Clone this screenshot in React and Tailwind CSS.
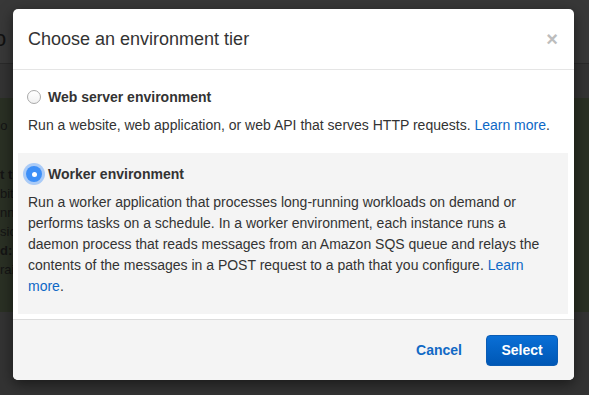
import React from "react";

const font = { fontFamily: '"Liberation Sans", Arial, Helvetica, sans-serif' };

function Radio({ checked }) {
  if (checked) {
    return (
      <span className="flex h-[16px] w-[16px] shrink-0 items-center justify-center rounded-full bg-[#3d8ff7] shadow-[0_0_0_3px_rgba(110,170,250,0.55)]">
        <span className="h-[5px] w-[5px] rounded-full bg-white" />
      </span>
    );
  }
  return (
    <span className="h-[14px] w-[14px] shrink-0 rounded-full border border-[#a9a9a9] bg-gradient-to-b from-white to-[#f1f1f1]" />
  );
}

function Option({ checked, label, children, boxed }) {
  return (
    <div
      className={
        boxed
          ? "bg-[#f4f4f4] px-[10px] pb-[17px] pt-[11px]"
          : "px-[10px] pb-[17px] pt-[17px]"
      }
    >
      <div className="ml-[-1px] flex h-[20px] items-center gap-[7px]">
        <span className="flex w-[14px] justify-center">
          <Radio checked={checked} />
        </span>
        <span className="text-[14px] font-bold text-[#333]">{label}</span>
      </div>
      <p className="mt-[8px] text-[14px] leading-[21px] text-[#333]">{children}</p>
    </div>
  );
}

export default function App() {
  return (
    <div className="relative h-[395px] w-[589px] overflow-hidden bg-[#333]" style={font}>
      {/* page behind the overlay */}
      <div className="flex flex-col">
        <div className="flex h-[64px] items-center border-b border-[#2a2a2a] bg-[#383838]">
          <span className="ml-[-6px] mt-[14px] text-[22px] text-[#111]">o</span>
        </div>
        <div className="h-[34px]" />
        <div className="flex h-[214px] flex-col bg-[#2a3024] pt-[18px] text-[13px] leading-[19px] text-[#141414]">
          <span className="ml-[-20px]">acco</span>
          <span className="mt-[30px] font-bold">t ti</span>
          <span>bit</span>
          <span>nni</span>
          <span>sic</span>
          <span className="font-bold">d:</span>
          <span>rail</span>
        </div>
      </div>

      {/* modal */}
      <div className="absolute left-[13px] top-[9px] flex h-[371px] w-[561px] flex-col overflow-hidden rounded-[5px] bg-white shadow-[0_4px_14px_rgba(0,0,0,0.5)]">
        <div className="flex h-[61px] shrink-0 items-center justify-between border-b border-[#e5e5e5] pl-[15px] pr-[16px]">
          <h2 className="text-[18px] text-[#333]">Choose an environment tier</h2>
          <span className="text-[20px] font-bold leading-none text-[#bdbdbd]">×</span>
        </div>

        <div className="flex-1 pl-[5px] pr-[6px]">
          <Option checked={false} label="Web server environment">
            Run a website, web application, or web API that serves HTTP requests.{" "}
            <a className="text-[#0d68c6]">Learn more</a>.
          </Option>
          <Option checked boxed label="Worker environment">
            Run a worker application that processes long-running workloads on demand or
            performs tasks on a schedule. In a worker environment, each instance runs a
            daemon process that reads messages from an Amazon SQS queue and relays the
            contents of the messages in a POST request to a path that you configure.{" "}
            <a className="text-[#0d68c6]">Learn more</a>.
          </Option>
        </div>

        <div className="flex h-[61px] shrink-0 items-center justify-end gap-[24px] border-t border-[#dcdcdc] bg-[#f4f4f4] pr-[16px]">
          <button className="text-[14px] font-bold text-[#1169c5]">Cancel</button>
          <button className="h-[31px] w-[72px] rounded-[4px] border border-[#0a5cb4] bg-gradient-to-b from-[#0a6fd6] to-[#0057b5] text-[14px] font-bold text-white">
            Select
          </button>
        </div>
      </div>
    </div>
  );
}
